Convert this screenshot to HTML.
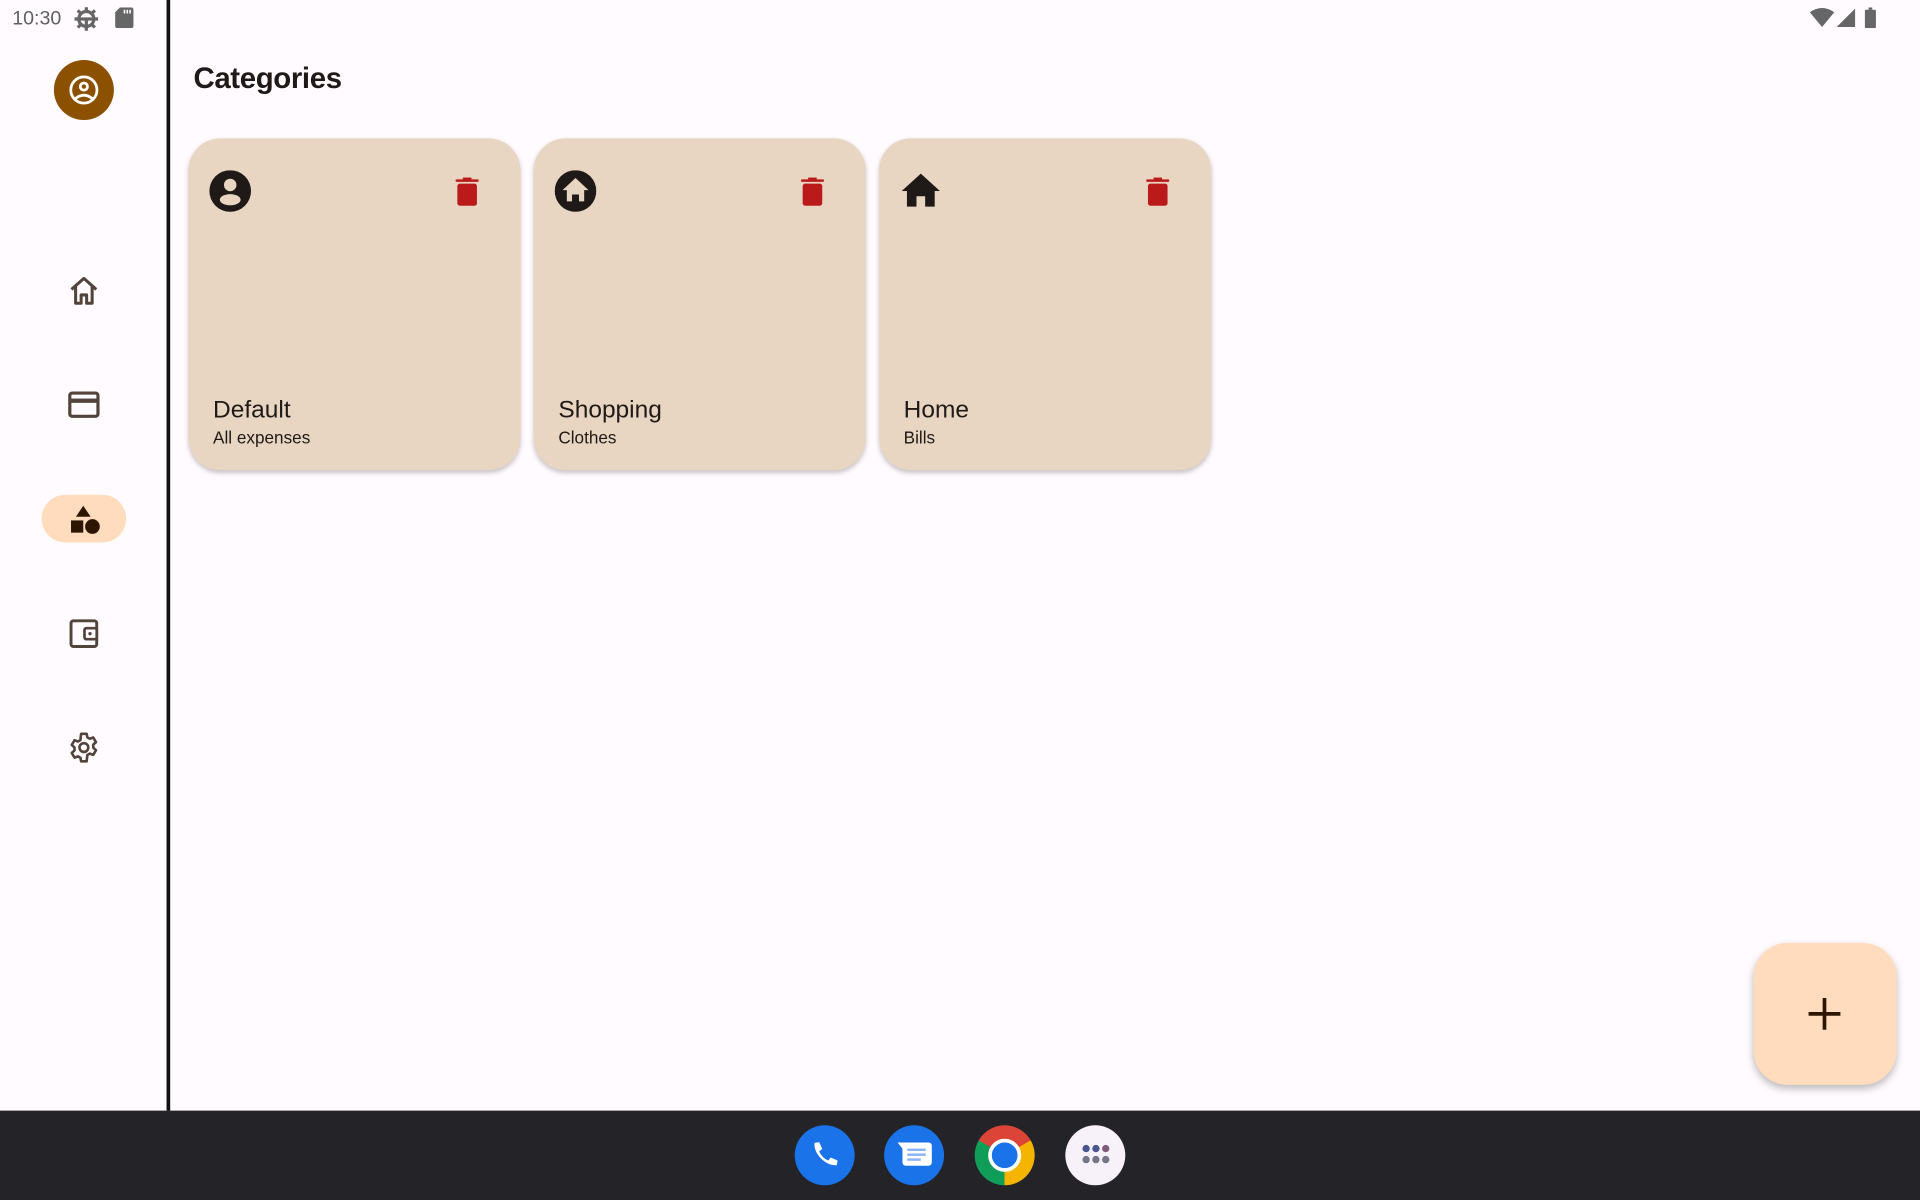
<!DOCTYPE html>
<html><head><meta charset="utf-8"><style>
html,body{margin:0;padding:0;width:1920px;height:1200px;overflow:hidden;background:#fffbfe;font-family:"Liberation Sans",sans-serif;}
#w{position:absolute;left:0;top:0;width:1568px;height:980px;transform:scale(1.22449);transform-origin:0 0;background:#fffbfe;}
.abs{position:absolute}
.card{position:absolute;top:113px;width:271px;height:271px;background:#e9d6c2;border-radius:26px;box-shadow:0 2px 4px rgba(0,0,0,.22)}
.card .t{position:absolute;left:20px;top:211px;font-size:20px;color:#1f1a17}
.card .s{position:absolute;left:20px;top:236px;font-size:14px;color:#1f1a17}
.card .ic{position:absolute;left:17px;top:26px}
.card .del{position:absolute;left:218px;top:32px}
</style></head><body><div id="w">
<div class="abs" style="left:10px;top:7px;font-size:16px;color:#5f5f5f">10:30</div>
<svg class="abs" style="left:60px;top:5px" width="21" height="21" viewBox="0 0 24 24"><circle cx="12" cy="12" r="7" fill="none" stroke="#666" stroke-width="3"/><g stroke="#666" stroke-width="3"><line x1="12" y1="1" x2="12" y2="5"/><line x1="12" y1="19" x2="12" y2="23"/><line x1="1" y1="12" x2="5" y2="12"/><line x1="19" y1="12" x2="23" y2="12"/><line x1="4" y1="4" x2="7" y2="7"/><line x1="17" y1="17" x2="20" y2="20"/><line x1="4" y1="20" x2="7" y2="17"/><line x1="17" y1="7" x2="20" y2="4"/><line x1="12" y1="12" x2="12" y2="19"/><line x1="6" y1="12" x2="18" y2="12"/></g></svg>
<svg class="abs" style="left:94px;top:6px" width="15" height="17" viewBox="0 0 15 17"><path d="M4 0H13Q15 0 15 2V15Q15 17 13 17H2Q0 17 0 15V4Z" fill="#666"/><g fill="#fff"><rect x="7" y="2" width="1.3" height="3"/><rect x="9.3" y="2" width="1.3" height="3"/><rect x="11.6" y="2" width="1.3" height="3"/></g></svg>
<svg class="abs" style="left:1478px;top:6px" width="60" height="17" viewBox="0 0 60 17"><path d="M0 4Q10 -3 20 4L10 16Z" fill="#666"/><path d="M22 16L37 1V16Z" fill="#666"/><rect x="45" y="2" width="9" height="15" rx="1" fill="#666"/><rect x="48" y="0" width="3" height="2" fill="#666"/></svg>
<div class="abs" style="left:136px;top:0;width:3px;height:907px;background:#111"></div>
<div class="abs" style="left:44px;top:49px;width:49px;height:49px;border-radius:50%;background:#8b5000"></div>
<svg class="abs" style="left:55px;top:60px" width="27" height="27" viewBox="0 0 24 24"><circle cx="12" cy="12" r="9.5" fill="none" stroke="#fff" stroke-width="2"/><circle cx="12" cy="9.5" r="2.6" fill="none" stroke="#fff" stroke-width="2"/><path d="M5.5 18.5Q12 13 18.5 18.5" fill="none" stroke="#fff" stroke-width="2"/></svg>
<svg class="abs" style="left:55px;top:225px" width="27" height="25" viewBox="0 0 24 22"><path d="M3 10L12 2L21 10M6 8V20H10V14H14V20H18V8" fill="none" stroke="#52443a" stroke-width="2.2" stroke-linejoin="round"/></svg>
<svg class="abs" style="left:55px;top:319px" width="27" height="24" viewBox="0 0 27 24"><rect x="2" y="2" width="23" height="19" rx="2" fill="none" stroke="#52443a" stroke-width="2.6"/><rect x="2" y="6.5" width="23" height="3.5" fill="#52443a"/></svg>
<div class="abs" style="left:34px;top:404px;width:69px;height:39px;border-radius:20px;background:#ffdcbe"></div>
<svg class="abs" style="left:56px;top:412px" width="26" height="25" viewBox="0 0 26 25"><path d="M12 1L18 10H6Z" fill="#2d1600"/><rect x="2" y="13" width="10" height="10" fill="#2d1600"/><circle cx="19.5" cy="18" r="6" fill="#2d1600"/></svg>
<svg class="abs" style="left:56px;top:505px" width="26" height="25" viewBox="0 0 26 25"><rect x="2" y="2" width="21" height="21" rx="2" fill="none" stroke="#52443a" stroke-width="2.4"/><rect x="13" y="8" width="10" height="9" rx="1.5" fill="#fffbfe" stroke="#52443a" stroke-width="2.2"/><circle cx="17.5" cy="12.5" r="1.4" fill="#52443a"/></svg>
<svg class="abs" style="left:55px;top:597px" width="27" height="27" viewBox="0 0 24 24"><path d="M10 2h4l.5 2.6 1.8 1 2.5-.9 2 3.4-2 1.8v2.2l2 1.8-2 3.4-2.5-.9-1.8 1L14 22h-4l-.5-2.6-1.8-1-2.5.9-2-3.4 2-1.8v-2.2l-2-1.8 2-3.4 2.5.9 1.8-1Z" fill="none" stroke="#52443a" stroke-width="1.9" stroke-linejoin="round"/><circle cx="12" cy="12" r="3.2" fill="none" stroke="#52443a" stroke-width="1.9"/></svg>
<div class="abs" style="left:158px;top:51px;font-size:24px;font-weight:bold;color:#1f1a17;letter-spacing:-0.3px">Categories</div>

<div class="card" style="left:154px">
<svg class="ic" width="34" height="34" viewBox="0 0 24 24"><circle cx="12" cy="12" r="12" fill="#1f1a17"/><circle cx="12" cy="8.5" r="3.6" fill="#e9d6c2"/><ellipse cx="12" cy="17" rx="6" ry="3.2" fill="#e9d6c2"/></svg>
<svg class="del" width="19" height="24" viewBox="0 0 19 24"><rect x="0" y="1.5" width="19" height="2" rx="1" fill="#ba1a1a"/><rect x="6" y="0" width="7" height="2" fill="#ba1a1a"/><rect x="1.5" y="5" width="16" height="18" rx="2" fill="#ba1a1a"/></svg>
<div class="t">Default</div><div class="s">All expenses</div></div>

<div class="card" style="left:436px">
<svg class="ic" width="34" height="34" viewBox="0 0 24 24"><circle cx="12" cy="12" r="12" fill="#1f1a17"/><path d="M12 4.5L19.5 11.5H17V18H14V14H10V18H7V11.5H4.5Z" fill="#e9d6c2"/></svg>
<svg class="del" width="19" height="24" viewBox="0 0 19 24"><rect x="0" y="1.5" width="19" height="2" rx="1" fill="#ba1a1a"/><rect x="6" y="0" width="7" height="2" fill="#ba1a1a"/><rect x="1.5" y="5" width="16" height="18" rx="2" fill="#ba1a1a"/></svg>
<div class="t">Shopping</div><div class="s">Clothes</div></div>

<div class="card" style="left:718px">
<svg class="ic" width="34" height="34" viewBox="0 0 24 24"><path d="M12 2L23 12H20V21H14.5V15H9.5V21H4V12H1Z" fill="#1f1a17"/></svg>
<svg class="del" width="19" height="24" viewBox="0 0 19 24"><rect x="0" y="1.5" width="19" height="2" rx="1" fill="#ba1a1a"/><rect x="6" y="0" width="7" height="2" fill="#ba1a1a"/><rect x="1.5" y="5" width="16" height="18" rx="2" fill="#ba1a1a"/></svg>
<div class="t">Home</div><div class="s">Bills</div></div>

<div class="abs" style="left:1432px;top:770px;width:117px;height:116px;border-radius:28px;background:#ffdcbe;box-shadow:0 3px 6px rgba(0,0,0,.25)"></div>
<svg class="abs" style="left:1476px;top:814px" width="28" height="28" viewBox="0 0 28 28"><path d="M14 1V27M1 14H27" stroke="#2d1600" stroke-width="3"/></svg>

<div class="abs" style="left:0;top:907px;width:1568px;height:73px;background:#242328"></div>
<div class="abs" style="left:649px;top:919px;width:49px;height:49px;border-radius:50%;background:#1a73e8"></div>
<svg class="abs" style="left:659px;top:929px" width="30" height="30" viewBox="0 0 24 24"><path d="M5 3.5l3-.5 2 4.5-2 1.5c1 2.5 3.5 5 6 6l1.5-2 4.5 2-.5 3c-7 1-15.5-7.5-14.5-14.5z" fill="#fff"/></svg>
<div class="abs" style="left:722px;top:919px;width:49px;height:49px;border-radius:50%;background:#1a73e8"></div>
<svg class="abs" style="left:732px;top:931px" width="30" height="24" viewBox="0 0 30 24"><path d="M1 2H26Q29 2 29 5V18Q29 21 26 21H8Q5 21 5 18V7Z" fill="#fff"/><g fill="#8ab4f8"><rect x="9" y="7" width="15" height="2"/><rect x="9" y="11" width="15" height="2"/><rect x="9" y="15" width="11" height="2"/></g></svg>
<div class="abs" style="left:796px;top:919px;width:49px;height:49px;border-radius:50%;background:conic-gradient(from -60deg,#db4437 0 120deg,#f4b400 120deg 240deg,#0f9d58 240deg 360deg)"></div>
<div class="abs" style="left:810px;top:933px;width:21px;height:21px;border-radius:50%;background:#1a73e8;border:3px solid #fff;margin:-3px 0 0 -3px"></div>
<div class="abs" style="left:870px;top:919px;width:49px;height:49px;border-radius:50%;background:#f7f2fa"></div>
<svg class="abs" style="left:880px;top:933px" width="30" height="20" viewBox="0 0 30 20"><g fill="#4a5590"><circle cx="7" cy="5" r="3"/><circle cx="15" cy="5" r="3"/></g><circle cx="23" cy="5" r="3" fill="#7d5c7a"/><g fill="#757588"><circle cx="7" cy="14" r="3"/><circle cx="15" cy="14" r="3"/><circle cx="23" cy="14" r="3"/></g></svg>
</div></body></html>
